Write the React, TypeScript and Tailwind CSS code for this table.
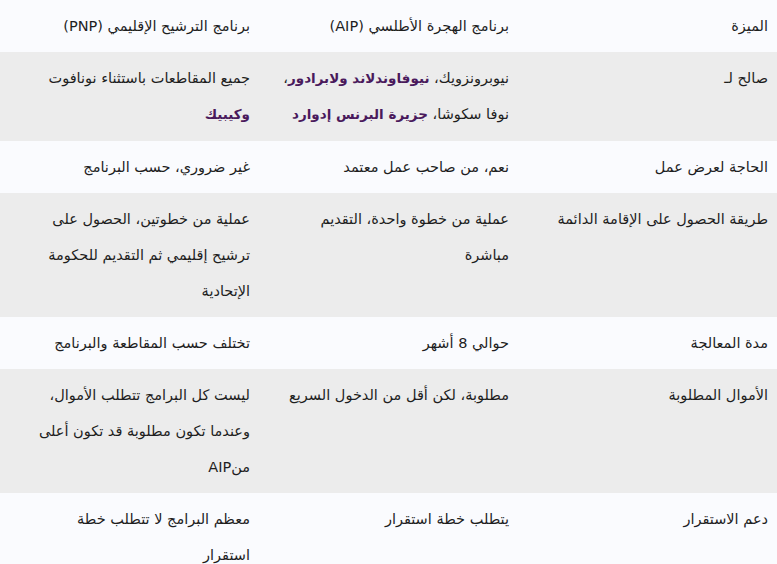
import React from "react";

type Cell = React.ReactNode;

const B = ({ children }: { children: React.ReactNode }) => (
  <strong className="font-bold text-[#4a1a5c] text-[13.5px] [font-family:'DejaVu_Sans',sans-serif]">{children}</strong>
);

const rows: { cells: Cell[]; gray: boolean; extra?: boolean }[] = [
  { gray: false, cells: ["الميزة", "برنامج الهجرة الأطلسي (AIP)", "برنامج الترشيح الإقليمي (PNP)"] },
  {
    gray: true,
    extra: true,
    cells: [
      "صالح لـ",
      <>
        نيوبرونزويك، <B>نيوفاوندلاند ولابرادور</B>،
        <br />
        نوفا سكوشا، <B>جزيرة البرنس إدوارد</B>
      </>,
      <>
        جميع المقاطعات باستثناء نونافوت
        <br />
        <B>وكيبيك</B>
      </>,
    ],
  },
  { gray: false, cells: ["الحاجة لعرض عمل", "نعم، من صاحب عمل معتمد", "غير ضروري، حسب البرنامج"] },
  {
    gray: true,
    cells: [
      "طريقة الحصول على الإقامة الدائمة",
      <>
        عملية من خطوة واحدة، التقديم
        <br />
        مباشرة
      </>,
      <>
        عملية من خطوتين، الحصول على
        <br />
        ترشيح إقليمي ثم التقديم للحكومة
        <br />
        الإتحادية
      </>,
    ],
  },
  { gray: false, cells: ["مدة المعالجة", "حوالي 8 أشهر", "تختلف حسب المقاطعة والبرنامج"] },
  {
    gray: true,
    cells: [
      "الأموال المطلوبة",
      "مطلوبة، لكن أقل من الدخول السريع",
      <>
        ليست كل البرامج تتطلب الأموال،
        <br />
        وعندما تكون مطلوبة قد تكون أعلى
        <br />
        منAIP
      </>,
    ],
  },
  {
    gray: false,
    cells: [
      "دعم الاستقرار",
      "يتطلب خطة استقرار",
      <>
        معظم البرامج لا تتطلب خطة
        <br />
        استقرار
      </>,
    ],
  },
];

export default function App() {
  return (
    <div
      dir="rtl"
      className="w-[777px] h-[564px] overflow-hidden bg-[#fafbfe] text-[#1e1e1e] text-[14.5px] leading-[36px] [font-family:'DejaVu_Sans',sans-serif]"
    >
      {rows.map((r, i) => (
        <div key={i} className={`grid grid-cols-3 ${r.gray ? "bg-[#ececec]" : "bg-[#fafbfe]"}`}>
          {r.cells.map((c, j) => (
            <div
              key={j}
              className={`pr-[9px] pl-[9px] pt-[8px] whitespace-nowrap ${r.extra ? "pb-[9px]" : "pb-[8px]"}`}
            >
              {c}
            </div>
          ))}
        </div>
      ))}
    </div>
  );
}
